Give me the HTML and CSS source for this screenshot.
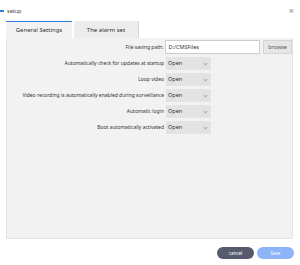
FILE: index.html
```html
<!DOCTYPE html>
<html lang="en">
<head>
  <meta charset="UTF-8">
  <title>setup</title>
  <link rel="stylesheet" href="styles.css">
</head>
<body>
  <div class="dialog">
    <div class="titlebar">
      <span class="mark"></span>
      <span class="title">setup</span>
      <span class="close">&times;</span>
    </div>

    <div class="tabs">
      <div class="tab active">General Settings</div>
      <div class="tab">The alarm set</div>
    </div>

    <div class="panel">
      <div class="row">
        <label>File saving path:</label>
        <input class="path" type="text" value="D:/CMSFiles">
        <button class="browse">browse</button>
      </div>
      <div class="row">
        <label>Automatically check for updates at startup</label>
        <div class="select">Open<span class="caret"></span></div>
      </div>
      <div class="row">
        <label>Loop video</label>
        <div class="select">Open<span class="caret"></span></div>
      </div>
      <div class="row">
        <label>Video recording is automatically enabled during surveillance</label>
        <div class="select">Open<span class="caret"></span></div>
      </div>
      <div class="row">
        <label>Automatic login</label>
        <div class="select">Open<span class="caret"></span></div>
      </div>
      <div class="row">
        <label>Boot automatically activated</label>
        <div class="select">Open<span class="caret"></span></div>
      </div>
    </div>

    <div class="footer">
      <button class="btn cancel">cancel</button>
      <button class="btn save">Save</button>
    </div>
  </div>
</body>
</html>
```

FILE: styles.css
```css
body {
  margin: 0;
  background: #fff;
  font-family: "Noto Sans", "Liberation Sans", sans-serif;
  color: #333;
}
.dialog {
  width: 300px;
  height: 265px;
}
.titlebar {
  display: flex;
  align-items: center;
  height: 21px;
  font-size: 5.5px;
}
.mark {
  width: 4px;
  height: 2px;
  background: #2f7de1;
  margin-right: 3px;
}
.title {
  flex: 1;
  color: #444;
}
.close {
  font-size: 9px;
  color: #888;
  margin-right: 6px;
}
.tabs {
  display: flex;
  margin-left: 6px;
  gap: 2px;
  height: 17px;
}
.tab {
  width: 65px;
  display: flex;
  align-items: center;
  justify-content: center;
  font-size: 6px;
  color: #333;
  background: #ececec;
  border-right: 1px solid #d8d8d8;
  box-sizing: border-box;
}
.tab.active {
  width: 66px;
  background: #f2f2f2;
  border-top: 1px solid #2f7de1;
  border-right: none;
}
.panel {
  margin: 0 7px 0 6px;
  height: 201px;
  background: #f2f2f2;
  border: 1px solid #e4e4e4;
  border-top: none;
  box-sizing: border-box;
  padding-top: 1px;
}
.row {
  display: flex;
  align-items: center;
  height: 16px;
  font-size: 5px;
}
.row label {
  width: 157px;
  text-align: right;
  margin-right: 2px;
  color: #333;
  white-space: nowrap;
}
.path {
  width: 95px;
  height: 14px;
  box-sizing: border-box;
  border: 1px solid #ccc;
  background: #fff;
  font: inherit;
  font-size: 5.5px;
  padding: 0 2px;
  color: #333;
  margin-right: 3px;
}
.browse {
  width: 29px;
  height: 14px;
  border: 1px solid #d4d4d4;
  background: #e6e6e6;
  font: inherit;
  font-size: 5.5px;
  color: #555;
  padding: 0;
}
.select {
  position: relative;
  width: 45px;
  height: 13px;
  line-height: 13px;
  background: #e3e3e3;
  box-sizing: border-box;
  padding-left: 2px;
  font-size: 5.5px;
  color: #333;
}
.caret {
  position: absolute;
  right: 4px;
  top: 5px;
  width: 2px;
  height: 2px;
  border-right: 1px solid #aaa;
  border-bottom: 1px solid #aaa;
  transform: rotate(45deg);
}
.footer {
  display: flex;
  justify-content: flex-end;
  gap: 3px;
  margin: 8px 6px 0 0;
}
.btn {
  width: 37px;
  height: 12px;
  border: none;
  border-radius: 6px;
  font: inherit;
  font-size: 4.5px;
  color: #fff;
  padding: 0;
}
.cancel {
  background: #575a6e;
}
.save {
  background: #8db3f8;
}
```
